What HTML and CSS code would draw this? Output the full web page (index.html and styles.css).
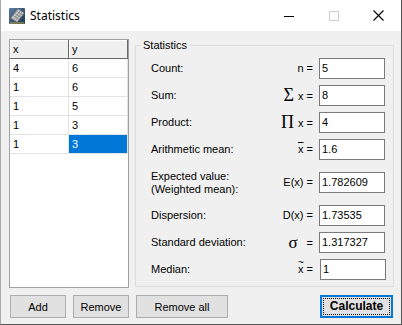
FILE: index.html
```html
<!DOCTYPE html>
<html>
<head>
<meta charset="utf-8">
<link rel="stylesheet" href="styles.css">
</head>
<body>
<div class="window">
  <div class="titlebar">
    <svg class="appicon" width="16" height="16" viewBox="0 0 16 16">
      <defs>
        <linearGradient id="bg" x1="0" y1="0" x2="1" y2="1">
          <stop offset="0" stop-color="#5d7fa3"/>
          <stop offset="1" stop-color="#1d3452"/>
        </linearGradient>
      </defs>
      <rect x="0" y="0" width="16" height="16" rx="1" fill="url(#bg)"/>
      <path d="M2 10 L9 1 L15 5 L8 14 Z" fill="#c9c9c9" stroke="#8a8a8a" stroke-width="0.6"/>
      <path d="M4 7.5 L10.5 11.6 M5.7 5.3 L12.2 9.4 M7.4 3.1 L13.8 7.2 M4.8 11.6 L11.2 2.8 M6.5 12.7 L12.9 3.9" stroke="#7d7d7d" stroke-width="0.7"/>
      <path d="M1 15 L15 15" stroke="#c2a93a" stroke-width="1"/>
    </svg>
    <span class="title">Statistics</span>
    <div class="caption-buttons">
      <span class="cb"><svg width="10" height="10" viewBox="0 0 10 10"><path d="M0 5.5 H10" stroke="#000" stroke-width="1"/></svg></span>
      <span class="cb"><svg width="10" height="10" viewBox="0 0 10 10"><rect x="0.5" y="0.5" width="9" height="9" fill="none" stroke="#cccccc" stroke-width="1"/></svg></span>
      <span class="cb"><svg width="11" height="11" viewBox="0 0 11 11"><path d="M0.5 0.5 L10.5 10.5 M10.5 0.5 L0.5 10.5" stroke="#000" stroke-width="1.1"/></svg></span>
    </div>
  </div>
  <div class="content">
    <div class="main">
      <div class="grid">
        <div class="grow">
          <div class="cell head">x</div><div class="cell head">y</div>
        </div>
        <div class="grow"><div class="cell">4</div><div class="cell">6</div></div>
        <div class="grow"><div class="cell">1</div><div class="cell">6</div></div>
        <div class="grow"><div class="cell">1</div><div class="cell">5</div></div>
        <div class="grow"><div class="cell">1</div><div class="cell">3</div></div>
        <div class="grow"><div class="cell">1</div><div class="cell sel">3</div></div>
      </div>
      <fieldset class="group">
        <legend>Statistics</legend>
        <div class="row">
          <span class="label">Count:</span>
          <span class="eq">n =</span>
          <div class="field">5</div>
        </div>
        <div class="row">
          <span class="label">Sum:</span>
          <span class="eq"><span class="big">Σ</span>x =</span>
          <div class="field">8</div>
        </div>
        <div class="row">
          <span class="label">Product:</span>
          <span class="eq"><span class="big">Π</span>x =</span>
          <div class="field">4</div>
        </div>
        <div class="row">
          <span class="label">Arithmetic mean:</span>
          <span class="eq"><span class="bar">x</span> =</span>
          <div class="field">1.6</div>
        </div>
        <div class="row tall">
          <span class="label">Expected value:<br>(Weighted mean):</span>
          <span class="eq">E(x) =</span>
          <div class="field">1.782609</div>
        </div>
        <div class="row">
          <span class="label">Dispersion:</span>
          <span class="eq">D(x) =</span>
          <div class="field">1.73535</div>
        </div>
        <div class="row">
          <span class="label">Standard deviation:</span>
          <span class="eq"><span class="sigma">σ</span>=</span>
          <div class="field">1.317327</div>
        </div>
        <div class="row">
          <span class="label">Median:</span>
          <span class="eq"><span class="tilde">x</span> =</span>
          <div class="field median">1</div>
        </div>
      </fieldset>
    </div>
    <div class="buttons">
      <button class="btn add">Add</button>
      <button class="btn remove">Remove</button>
      <button class="btn removeall">Remove all</button>
      <button class="btn calc"><span class="focus">Calculate</span></button>
    </div>
  </div>
</div>
</body>
</html>
```
FILE: styles.css
```css
* { box-sizing: border-box; }
html, body { margin: 0; padding: 0; background: #f0f0f0; }
body { font-family: "Liberation Sans", Arial, sans-serif; font-size: 11px; color: #000; }

.window {
  width: 402px;
  height: 325px;
  display: flex;
  flex-direction: column;
  border-left: 1px solid #aaaaaa;
  border-right: 1px solid #555555;
  border-bottom: 1px solid #555555;
  background: #f0f0f0;
}

.titlebar {
  height: 31px;
  flex: none;
  background: #fff;
  display: flex;
  align-items: center;
  padding-left: 8px;
}
.appicon { flex: none; }
.title {
  font-family: "Noto Sans", "Open Sans", sans-serif;
  font-size: 12px;
  margin-left: 5px;
  margin-top: -1px;
}
.caption-buttons { margin-left: auto; display: flex; height: 31px; }
.cb { width: 45px; display: flex; align-items: center; justify-content: center; }
.cb svg { display: block; }

.content {
  flex: 1;
  display: flex;
  flex-direction: column;
  gap: 7px;
  padding: 8px 7px 0 8px;
}

.main { display: flex; gap: 6px; height: 249px; }

.grid {
  width: 120px;
  height: 249px;
  flex: none;
  background: #fff;
  border: 1px solid #a0a0a0;
}
.grow { display: flex; }
.cell {
  width: 59px;
  height: 19px;
  line-height: 18px;
  padding-left: 3px;
  border-right: 1px solid #e3e3e3;
  border-bottom: 1px solid #e3e3e3;
}
.cell.head {
  background: #f0f0f0;
  border-right: 1px solid #696969;
  border-bottom: 1px solid #696969;
  box-shadow: inset 1px 1px 0 #ffffff;
}
.cell.sel { background: #0078d7; color: #fff; }

.group {
  margin: 0;
  flex: 1;
  height: 248px;
  border: 1px solid #dcdcdc;
  padding: 6px 8px 0 15px;
  display: flex;
  flex-direction: column;
  gap: 6px;
  min-width: 0;
}
.group legend {
  padding: 0 2px;
  margin-left: -10px;
  line-height: 13px;
}

.row { display: flex; align-items: center; height: 21px; }
.row.tall { margin: 6px 0 6px; }
.label { flex: 1; line-height: 13px; }
.eq { margin-right: 6px; white-space: nowrap; line-height: 13px; }
.big {
  font-family: "Liberation Serif", "DejaVu Serif", serif;
  font-size: 18px;
  line-height: 13px;
  margin-right: 4px;
  vertical-align: -1px;
}
.bar { text-decoration: overline; }
.sigma {
  font-family: "Liberation Serif", "DejaVu Serif", serif;
  font-size: 17px;
  margin-right: 9px;
  line-height: 13px;
  vertical-align: -1px;
}
.tilde { position: relative; }
.tilde::before {
  content: "~";
  position: absolute;
  left: 0px;
  top: -7px;
  font-size: 10px;
}

.field {
  width: 66px;
  height: 21px;
  flex: none;
  border: 1px solid #7a7a7a;
  background: #fff;
  padding-left: 2px;
  line-height: 19px;
}
.field.median { margin-left: 1px; margin-right: -1px; }

.buttons { display: flex; height: 23px; padding-left: 1px; }
.btn {
  font-family: "Liberation Sans", Arial, sans-serif;
  font-size: 11px;
  color: #000;
  background: #e1e1e1;
  border: 1px solid #adadad;
  height: 23px;
  padding: 0;
  margin: 0;
}
.add { width: 56px; }
.remove { width: 56px; margin-left: 7px; }
.removeall { width: 92px; margin-left: 7px; }
.calc {
  width: 73px;
  margin-left: auto;
  margin-right: 1px;
  border: 2px solid #0078d7;
  font-weight: bold;
  font-size: 12px;
  padding: 1px;
}
.focus {
  display: block;
  height: 100%;
  border: 1px dotted #000;
  line-height: 15px;
}
```
